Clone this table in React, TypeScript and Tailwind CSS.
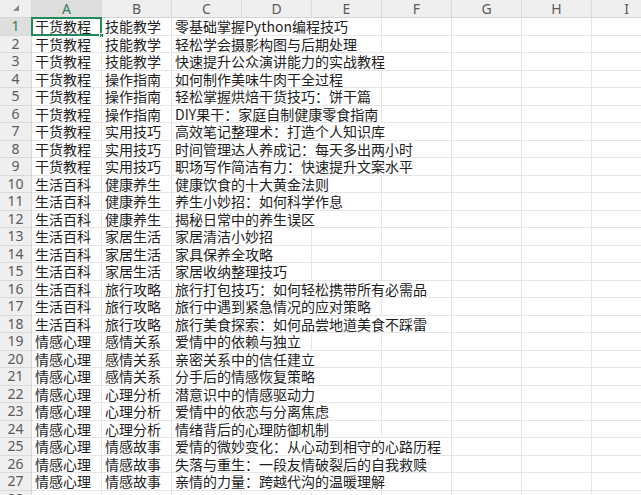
import React from 'react';

const rows: [string, string, string][] = [
  ['干货教程', '技能教学', '零基础掌握Python编程技巧'],
  ['干货教程', '技能教学', '轻松学会摄影构图与后期处理'],
  ['干货教程', '技能教学', '快速提升公众演讲能力的实战教程'],
  ['干货教程', '操作指南', '如何制作美味牛肉干全过程'],
  ['干货教程', '操作指南', '轻松掌握烘焙干货技巧：饼干篇'],
  ['干货教程', '操作指南', 'DIY果干：家庭自制健康零食指南'],
  ['干货教程', '实用技巧', '高效笔记整理术：打造个人知识库'],
  ['干货教程', '实用技巧', '时间管理达人养成记：每天多出两小时'],
  ['干货教程', '实用技巧', '职场写作简洁有力：快速提升文案水平'],
  ['生活百科', '健康养生', '健康饮食的十大黄金法则'],
  ['生活百科', '健康养生', '养生小妙招：如何科学作息'],
  ['生活百科', '健康养生', '揭秘日常中的养生误区'],
  ['生活百科', '家居生活', '家居清洁小妙招'],
  ['生活百科', '家居生活', '家具保养全攻略'],
  ['生活百科', '家居生活', '家居收纳整理技巧'],
  ['生活百科', '旅行攻略', '旅行打包技巧：如何轻松携带所有必需品'],
  ['生活百科', '旅行攻略', '旅行中遇到紧急情况的应对策略'],
  ['生活百科', '旅行攻略', '旅行美食探索：如何品尝地道美食不踩雷'],
  ['情感心理', '感情关系', '爱情中的依赖与独立'],
  ['情感心理', '感情关系', '亲密关系中的信任建立'],
  ['情感心理', '感情关系', '分手后的情感恢复策略'],
  ['情感心理', '心理分析', '潜意识中的情感驱动力'],
  ['情感心理', '心理分析', '爱情中的依恋与分离焦虑'],
  ['情感心理', '心理分析', '情绪背后的心理防御机制'],
  ['情感心理', '情感故事', '爱情的微妙变化：从心动到相守的心路历程'],
  ['情感心理', '情感故事', '失落与重生：一段友情破裂后的自我救赎'],
  ['情感心理', '情感故事', '亲情的力量：跨越代沟的温暖理解'],
];

const letters = ['A', 'B', 'C', 'D', 'E', 'F', 'G', 'H', 'I', 'J'];

const spanWidth: Record<number, string> = {
  1: 'w-[70px]',
  2: 'w-[140px]',
  3: 'w-[210px]',
  4: 'w-[280px]',
  5: 'w-[350px]',
};

// how many columns the text in C runs over
const spanOf = (text: string) => {
  let w = 4;
  for (const ch of text) w += /[\x00-\x7f]/.test(ch) ? 7 : 14;
  return Math.min(5, Math.ceil(w / 70));
};

const cellFont = { fontFamily: '"Noto Sans CJK SC", "Noto Sans", sans-serif' };

const App: React.FC = () => {
  return (
    <div className="w-[641px] h-[495px] overflow-hidden bg-white text-[14px]" style={cellFont}>
      {/* column headers */}
      <div className="flex h-[18px] bg-[#efefef] border-b border-[#d4d4d4]">
        <div className="w-[32px] shrink-0 relative border-r border-[#d9d9d9]">
          <svg className="absolute left-[13px] top-[5px]" width="6" height="6" viewBox="0 0 6 6">
            <path d="M6 0 L6 6 L0 6 Z" fill="#8a8a8a" />
          </svg>
        </div>
        {letters.map((l, i) => (
          <div
            key={l}
            className={`w-[70px] shrink-0 flex items-center justify-center border-r border-[#dcdcdc] text-[14px] leading-none ${
              i === 0 ? 'bg-[#dedede] text-[#2f7d55]' : 'text-[#5b5b5b]'
            }`}
            style={{ fontFamily: '"Noto Sans", sans-serif' }}
          >
            {l}
          </div>
        ))}
      </div>

      {/* rows */}
      {[...rows, ['', '', ''] as [string, string, string]].map((r, idx) => {
        const span = r[2] ? spanOf(r[2]) : 1;
        const rest = letters.length - 2 - span;
        return (
          <div key={idx} className="flex h-[17.5px]">
            <div
              className={`w-[32px] shrink-0 flex items-center justify-center border-r border-b border-[#d9d9d9] text-[14px] leading-none ${
                idx === 0 ? 'bg-[#dedede] text-[#2f7d55]' : 'bg-[#efefef] text-[#5b5b5b]'
              }`}
              style={{ fontFamily: '"Noto Sans", sans-serif' }}
            >
              {idx + 1}
            </div>
            <div className="w-[70px] shrink-0 relative border-r border-b border-[#e6e6e6] pl-[3px] leading-[17px] whitespace-nowrap text-[#1e1e1e]">
              {r[0]}
              {idx === 0 && (
                <div className="absolute left-[-1px] top-[-1px] w-[71px] h-[19px] border-2 border-[#1f8a5a]">
                  <div className="absolute right-[-4px] bottom-[-4px] w-[5px] h-[5px] bg-[#1f8a5a] border border-white" />
                </div>
              )}
            </div>
            <div className="w-[70px] shrink-0 border-r border-b border-[#e6e6e6] pl-[3px] leading-[17px] whitespace-nowrap text-[#1e1e1e]">
              {r[1]}
            </div>
            <div
              className={`${spanWidth[span]} shrink-0 border-r border-b border-[#e6e6e6] pl-[3px] leading-[17px] whitespace-nowrap text-[#1e1e1e]`}
            >
              {r[2]}
            </div>
            {Array.from({ length: rest }).map((_, k) => (
              <div key={k} className="w-[70px] shrink-0 border-r border-b border-[#e6e6e6]" />
            ))}
          </div>
        );
      })}
    </div>
  );
};

export default App;
